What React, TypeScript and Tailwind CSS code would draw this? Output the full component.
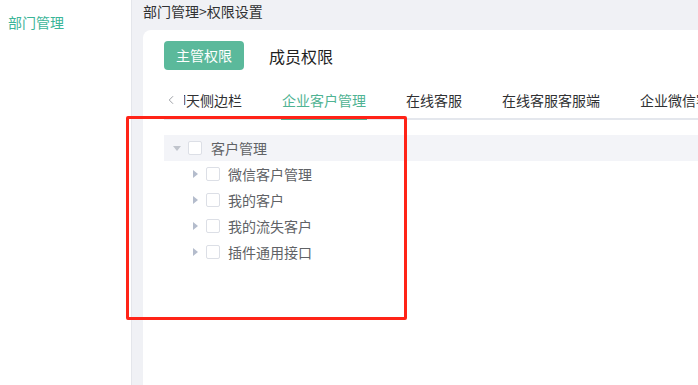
import { ChevronLeft } from "lucide-react"

const tabs = ['聊天侧边栏', '企业客户管理', '在线客服', '在线客服客服端', '企业微信客户']
const children = ['微信客户管理', '我的客户', '我的流失客户', '插件通用接口']

function Checkbox() {
  return <span className="block w-[14px] h-[14px] shrink-0 rounded-[2px] border border-[#dcdfe6] bg-white" />
}

function Caret({ down }: { down?: boolean }) {
  return down ? (
    <span className="block w-0 h-0 border-l-[4px] border-r-[4px] border-t-[5px] border-l-transparent border-r-transparent border-t-[#c0c4cc]" />
  ) : (
    <span className="block w-0 h-0 border-t-[4px] border-b-[4px] border-l-[5px] border-t-transparent border-b-transparent border-l-[#b4bccc]" />
  )
}

export default function App() {
  return (
    <div
      className="flex w-[698px] h-[385px] overflow-hidden bg-white text-sm"
      style={{ fontFamily: '"Noto Sans CJK SC", "Liberation Sans", sans-serif' }}
    >
      {/* Sidebar */}
      <aside className="w-[132px] shrink-0 border-r border-[#e4e6eb] bg-white">
        <div className="pl-2 pt-[11px] leading-[22px] text-[#3bb598]">部门管理</div>
      </aside>

      {/* Main */}
      <main className="flex-1 flex flex-col bg-[#f0f1f5] pl-[11px] min-w-0">
        <div className="h-[30px] pt-[1px] leading-[20px] text-[#303133]">部门管理&gt;权限设置</div>

        <div className="flex-1 bg-white rounded-tl-lg pl-[21px] pt-[11px] min-w-0">
          <div className="flex items-center gap-[25px]">
            <button className="w-[80px] h-[29px] rounded bg-[#5bb99b] text-white leading-[29px]">主管权限</button>
            <span className="text-base text-[#1f1f1f]">成员权限</span>
          </div>

          {/* Tabs */}
          <div className="mt-[10px] relative h-[40px] flex">
            <div className="absolute left-0 right-0 bottom-0 h-[2px] bg-[#e4e7ed]" />
            <span className="w-[20px] shrink-0 flex items-center text-[#909399]">
              <ChevronLeft className="w-[14px] h-[14px]" strokeWidth={1.5} />
            </span>
            <div className="flex-1 overflow-hidden min-w-0">
              <div className="flex ml-[-32px] h-full">
                {tabs.map((t, i) => (
                  <div
                    key={t}
                    className={`relative shrink-0 px-5 leading-[40px] whitespace-nowrap ${
                      i === 1 ? 'text-[#4fb393]' : 'text-[#303133]'
                    }`}
                  >
                    {t}
                    {i === 1 && <span className="absolute left-[19px] right-[19px] bottom-0 h-[2px] bg-[#4fb393]" />}
                  </div>
                ))}
              </div>
            </div>
          </div>

          {/* Tree */}
          <div className="mt-[15px] text-[#606266]">
            <div className="flex items-center h-[26px] bg-[#f3f4f8] pl-[6px]">
              <span className="w-[14px] flex justify-center"><Caret down /></span>
              <span className="ml-[4px]"><Checkbox /></span>
              <span className="ml-[9px] leading-[26px]">客户管理</span>
            </div>
            {children.map((c) => (
              <div key={c} className="flex items-center h-[26px] pl-[24px]">
                <span className="w-[14px] flex justify-center"><Caret /></span>
                <span className="ml-[4px]"><Checkbox /></span>
                <span className="ml-[8px] leading-[26px]">{c}</span>
              </div>
            ))}
          </div>
        </div>
      </main>

      {/* Annotation box */}
      <div className="absolute left-[126px] top-[116px] w-[281px] h-[204px] border-[3px] border-[#ff2317] rounded-[2px] pointer-events-none" />
    </div>
  )
}
